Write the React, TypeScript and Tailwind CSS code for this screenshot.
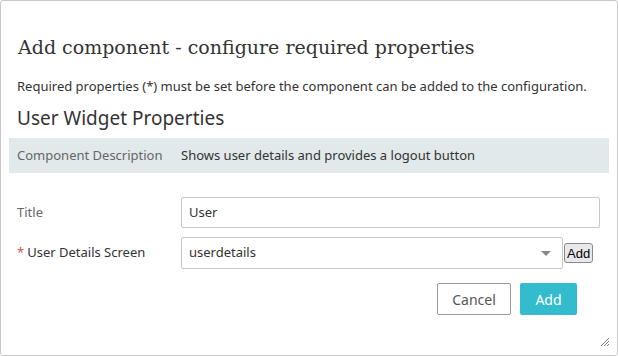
import React from 'react'

const sans = { fontFamily: '"Noto Sans", "Open Sans", sans-serif' }

const App = () => {
  return (
    <div className="w-[618px] h-[356px] bg-white" style={sans}>
      <div className="h-full border border-[#c8c8c8] rounded-[3px] flex flex-col px-[16px] pt-[32px] relative">
        {/* HEADER */}
        <h1 className="text-[19px] leading-[28px] text-[#333] ml-px" style={{ fontFamily: '"DejaVu Serif", serif' }}>
          Add component - configure required properties
        </h1>
        <p className="mt-[16px] text-[13px] leading-[18px] text-[#333]">
          Required properties (*) must be set before the component can be added to the configuration.
        </p>
        <h2 className="mt-[10px] text-[19px] leading-[26px] text-[#333]">User Widget Properties</h2>

        {/* DESCRIPTION BAND */}
        <div className="mt-[7px] -mx-[8px] h-[35px] bg-[#e1e9ea] flex items-center px-[8px] text-[13px]">
          <span className="w-[164px] text-[#666]">Component Description</span>
          <span className="text-[#333]">Shows user details and provides a logout button</span>
        </div>

        {/* FORM */}
        <div className="mt-[24px] flex flex-col gap-[9px] text-[13px] text-[#333]">
          <div className="flex items-center">
            <label className="w-[164px] text-[#666]">Title</label>
            <div className="w-[419px] h-[31px] border border-[#c8c8c8] rounded-[2px] flex items-center px-[7px]">User</div>
          </div>
          <div className="flex items-center">
            <label className="w-[164px]">
              <span className="text-[#d9534f] mr-[3px]">*</span>User Details Screen
            </label>
            <div className="w-[382px] h-[32px] border border-[#c8c8c8] rounded-[2px] flex items-center justify-between px-[7px]">
              <span>userdetails</span>
              <svg width="10" height="5" viewBox="0 0 10 5" className="mr-[4px]">
                <path d="M0 0 L10 0 L5 5 Z" fill="#888" />
              </svg>
            </div>
            <button
              className="ml-[1px] h-[20px] px-[2px] border border-[#8a8a8a] rounded-[3px] bg-[#e9e9ed] text-[13px] text-black leading-none"
              style={{ fontFamily: '"Liberation Sans", sans-serif' }}
            >
              Add
            </button>
          </div>
        </div>

        {/* ACTIONS */}
        <div className="mt-[14px] flex justify-end gap-[9px] pr-[24px]">
          <button className="w-[74px] h-[32px] border border-[#999] rounded-[2px] text-[14px] text-[#555] bg-white">Cancel</button>
          <button className="w-[57px] h-[32px] rounded-[2px] text-[14px] text-white bg-[#33bccd]">Add</button>
        </div>

        {/* RESIZE GRIP */}
        <svg width="10" height="10" viewBox="0 0 10 10" className="absolute right-[7px] bottom-[8px]">
          <path d="M9 1 L1 9 M9 4 L4 9 M9 7 L7 9" stroke="#777" strokeWidth="1" />
        </svg>
      </div>
    </div>
  )
}

export default App
